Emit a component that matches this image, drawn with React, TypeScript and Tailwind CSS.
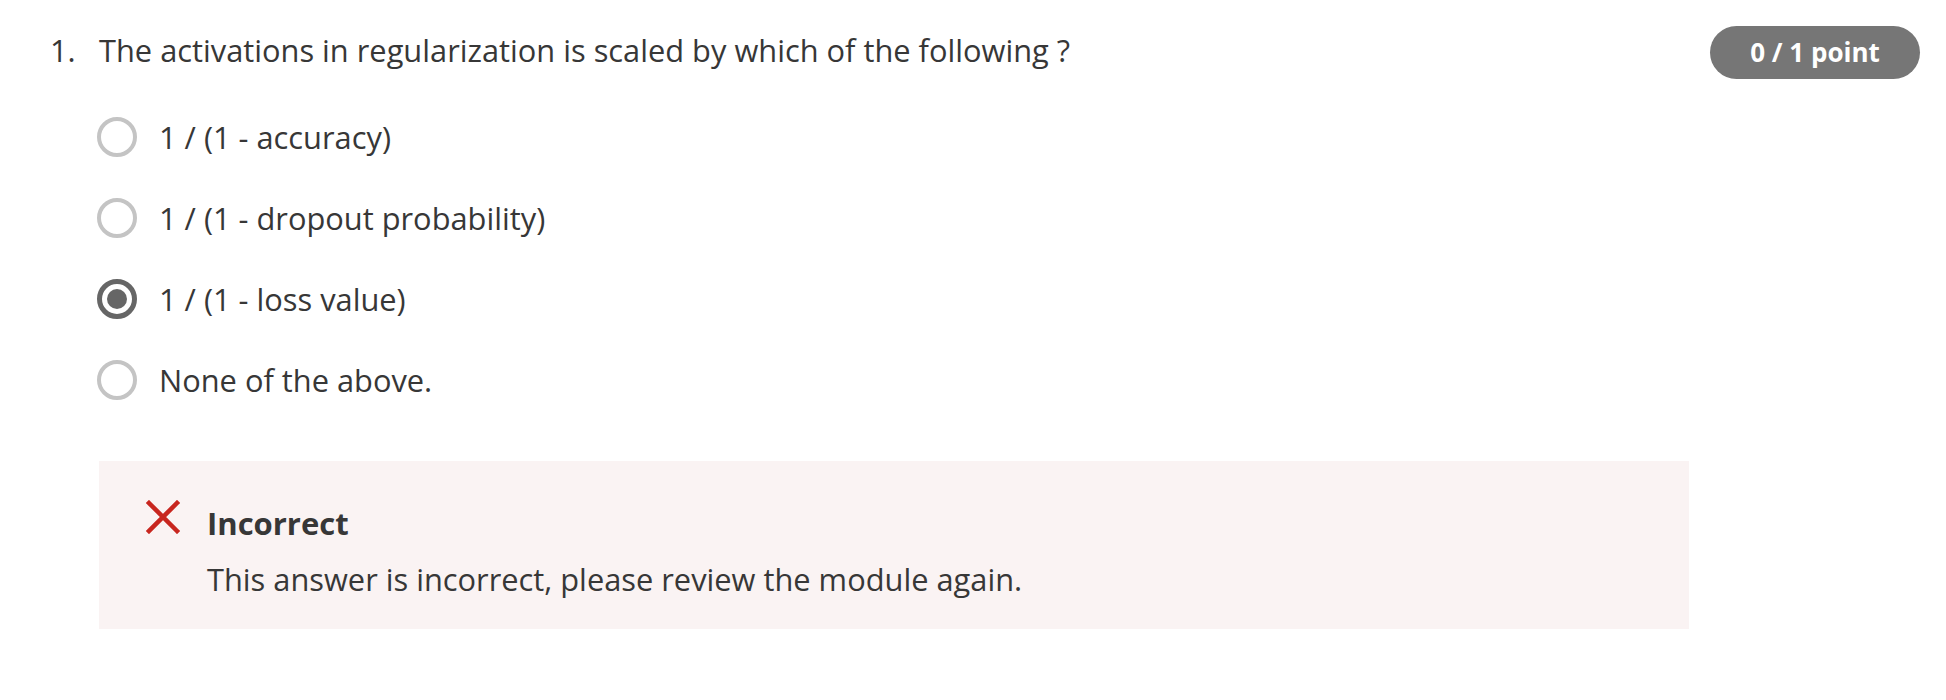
import React from 'react';

const options = [
  { label: '1 / (1 - accuracy)', selected: false },
  { label: '1 / (1 - dropout probability)', selected: false },
  { label: '1 / (1 - loss value)', selected: true },
  { label: 'None of the above.', selected: false },
];

function Radio({ selected }: { selected: boolean }) {
  if (selected) {
    return (
      <span className="flex h-[40px] w-[40px] shrink-0 items-center justify-center rounded-full border-[5px] border-[#666666]">
        <span className="h-[20px] w-[20px] rounded-full bg-[#666666]" />
      </span>
    );
  }
  return <span className="h-[40px] w-[40px] shrink-0 rounded-full border-[4px] border-[#c4c4c4]" />;
}

export default function App() {
  return (
    <main
      className="min-h-[700px] w-full bg-white pl-[50px] pr-[26px] pt-[26px] text-[#373737]"
      style={{ fontFamily: '"Open Sans", "Liberation Sans", sans-serif' }}
    >
      {/* Question header */}
      <div className="flex items-start justify-between">
        <div className="flex pt-[2px] text-[30.8px] leading-[44px]">
          <span className="w-[49px] shrink-0">1.</span>
          <span>The activations in regularization is scaled by which of the following ?</span>
        </div>
        <div className="flex h-[53px] w-[210px] items-center justify-center rounded-full bg-[#767676] text-[26px] font-bold text-white">
          0 / 1 point
        </div>
      </div>

      {/* Options */}
      <div className="ml-[47px] mt-[17px] flex flex-col">
        {options.map((o) => (
          <div key={o.label} className="flex h-[81px] items-center gap-[22px]">
            <Radio selected={o.selected} />
            <span className="text-[30.8px] leading-[40px]">{o.label}</span>
          </div>
        ))}
      </div>

      {/* Feedback */}
      <div className="ml-[49px] mt-[41px] flex w-[1590px] items-start gap-[27px] bg-[#faf3f3] pb-[30px] pl-[47px] pt-[39px]">
        <svg width="34" height="34" viewBox="0 0 34 34" className="shrink-0">
          <path d="M3 3 L31 31 M31 3 L3 31" stroke="#c8261f" strokeWidth="4.5" strokeLinecap="square" />
        </svg>
        <div className="flex flex-col gap-[16px] pt-[3px]">
          <span className="text-[31px] font-bold leading-[40px]">Incorrect</span>
          <span className="text-[30.8px] leading-[40px]">This answer is incorrect, please review the module again.</span>
        </div>
      </div>
    </main>
  );
}
